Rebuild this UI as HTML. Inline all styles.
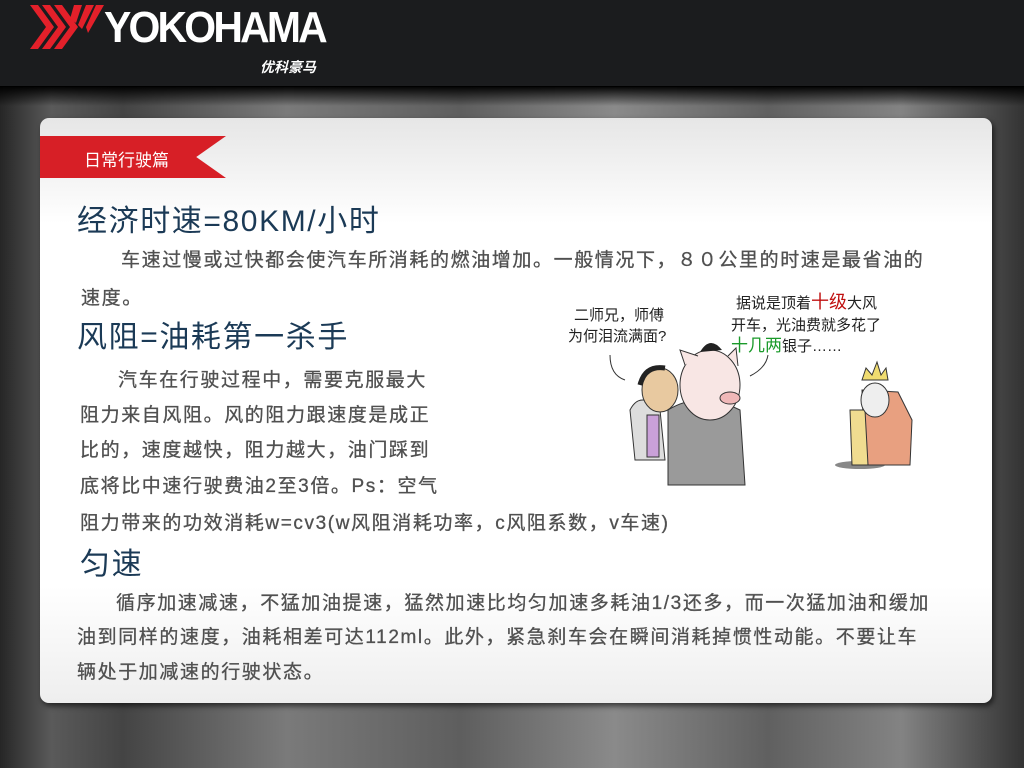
<!DOCTYPE html>
<html><head><meta charset="utf-8"><style>
*{margin:0;padding:0}
body{width:1024px;height:768px;overflow:hidden;position:relative;font-family:"Liberation Sans","Noto Sans CJK SC",sans-serif;
background:linear-gradient(90deg,#262626 0%,#5a5a5a 5%,#444 12%,#7a7a7a 28%,#5e5e5e 45%,#8a8a8a 60%,#606060 75%,#838383 88%,#333 100%);}
.hdr{position:absolute;left:0;top:0;width:1024px;height:86px;background:#1b1c1e;border-bottom:1px solid #000;}
.shade{position:absolute;left:0;top:86px;width:1024px;height:20px;background:linear-gradient(#000,rgba(0,0,0,0));}
.logo{position:absolute;left:104px;top:3px;color:#fff;font-weight:bold;font-size:44px;letter-spacing:-3px;transform:scaleX(0.93);transform-origin:left;}
.sub{position:absolute;left:260px;top:57px;color:#fff;font-weight:bold;font-style:italic;font-size:14px;}
.card{position:absolute;left:40px;top:118px;width:952px;height:585px;border-radius:9px;background:linear-gradient(#e6e6e6 0%,#fff 18%,#fff 80%,#eee 100%);box-shadow:2px 3px 6px rgba(0,0,0,.6);}
.rib{position:absolute;left:40px;top:136px;width:186px;height:42px;background:#d71f26;clip-path:polygon(0 0,100% 0,84% 50%,100% 100%,0 100%);}
.rib span{position:absolute;left:44px;top:10px;color:#fff;font-size:17px}
.h{position:absolute;color:#1b3a56;font-size:30px;white-space:nowrap;letter-spacing:1.6px}
.p{position:absolute;color:#505050;font-size:19px;white-space:nowrap;letter-spacing:1.6px;-webkit-text-stroke:0.3px #505050}
</style></head><body>
<div class="hdr"></div><div class="shade"></div>
<svg style="position:absolute;left:30px;top:5px" width="75" height="44" viewBox="0 0 75 44">
<g fill="#e3202a">
<polygon points="0,0 8,0 24,22 8,44 0,44 16,22"/>
<polygon points="12,0 20,0 36,22 20,44 12,44 28,22"/>
<polygon points="24,0 32,0 48,22 32,44 24,44 40,22"/>
<polygon points="44,0 52,0 46,18 40,14"/>
<polygon points="56,0 64,0 52,24 48,20"/>
<polygon points="66,0 74,0 58,28 56,22"/>
</g></svg>
<div class="logo">YOKOHAMA</div>
<div class="sub">优科豪马</div>
<div class="card"></div>
<div class="rib"><span>日常行驶篇</span></div>
<div class="h" style="left:77px;top:196px">经济时速=80KM/小时</div>
<div class="p" style="left:121px;top:245px">车速过慢或过快都会使汽车所消耗的燃油增加。一般情况下，８０公里的时速是最省油的</div>
<div class="p" style="left:81px;top:283px">速度。</div>
<div class="h" style="left:77px;top:312px">风阻=油耗第一杀手</div>
<div class="p" style="left:118px;top:365px">汽车在行驶过程中，需要克服最大</div>
<div class="p" style="left:80px;top:400px">阻力来自风阻。风的阻力跟速度是成正</div>
<div class="p" style="left:80px;top:435px">比的，速度越快，阻力越大，油门踩到</div>
<div class="p" style="left:80px;top:471px">底将比中速行驶费油2至3倍。Ps：空气</div>
<div class="p" style="left:80px;top:508px">阻力带来的功效消耗w=cv3(w风阻消耗功率，c风阻系数，v车速)</div>
<div class="h" style="left:80px;top:539px">匀速</div>
<div class="p" style="left:116px;top:588px">循序加速减速，不猛加油提速，猛然加速比均匀加速多耗油1/3还多，而一次猛加油和缓加</div>
<div class="p" style="left:77px;top:622px">油到同样的速度，油耗相差可达112ml。此外，紧急刹车会在瞬间消耗掉惯性动能。不要让车</div>
<div class="p" style="left:77px;top:657px">辆处于加减速的行驶状态。</div>
<svg style="position:absolute;left:550px;top:280px" width="380" height="220" viewBox="0 0 380 220">
<g font-family="Liberation Sans,Noto Sans CJK SC,sans-serif" font-size="15" fill="#222">
<text x="24" y="40">二师兄，师傅</text>
<text x="18" y="61">为何泪流满面?</text>
<text x="186" y="28">据说是顶着<tspan fill="#c01010" font-size="18">十级</tspan>大风</text>
<text x="181" y="50">开车，光油费就多花了</text>
<text x="181" y="71"><tspan fill="#1a9a2a" font-size="17">十几两</tspan>银子……</text>
</g>
<path d="M60 75 Q60 95 75 100" stroke="#333" fill="none"/>
<path d="M218 75 Q216 88 200 96" stroke="#333" fill="none"/>
<path d="M85 180 L80 130 Q90 110 110 130 L115 180 Z" fill="#ddd" stroke="#333"/>
<rect x="97" y="135" width="12" height="42" fill="#c9a0d8" stroke="#333"/>
<ellipse cx="110" cy="110" rx="18" ry="22" fill="#e8c9a0" stroke="#333"/>
<path d="M90 105 Q95 85 115 88" stroke="#222" stroke-width="5" fill="none"/>
<path d="M118 205 L118 130 Q150 110 190 130 L195 205 Z" fill="#9a9a9a" stroke="#333"/>
<ellipse cx="160" cy="105" rx="30" ry="35" fill="#f8e6e4" stroke="#333"/>
<ellipse cx="180" cy="118" rx="10" ry="6" fill="#f0b8b8" stroke="#333"/>
<path d="M135 85 L130 70 L148 76 M178 76 L186 68 L188 86" fill="#f8e6e4" stroke="#333"/>
<path d="M150 72 Q160 55 172 70" fill="#222"/>
<ellipse cx="310" cy="185" rx="25" ry="4" fill="#888"/>
<path d="M312 110 L348 112 L362 140 L360 185 L315 185 Z" fill="#e8a080" stroke="#333"/>
<path d="M300 130 L315 130 L318 185 L302 185 Z" fill="#f0dc90" stroke="#333"/>
<ellipse cx="325" cy="120" rx="14" ry="17" fill="#eee" stroke="#333"/>
<path d="M312 100 L316 88 L322 95 L327 82 L331 95 L336 88 L338 100 Z" fill="#f0dc70" stroke="#333"/>
</svg>
</body></html>
